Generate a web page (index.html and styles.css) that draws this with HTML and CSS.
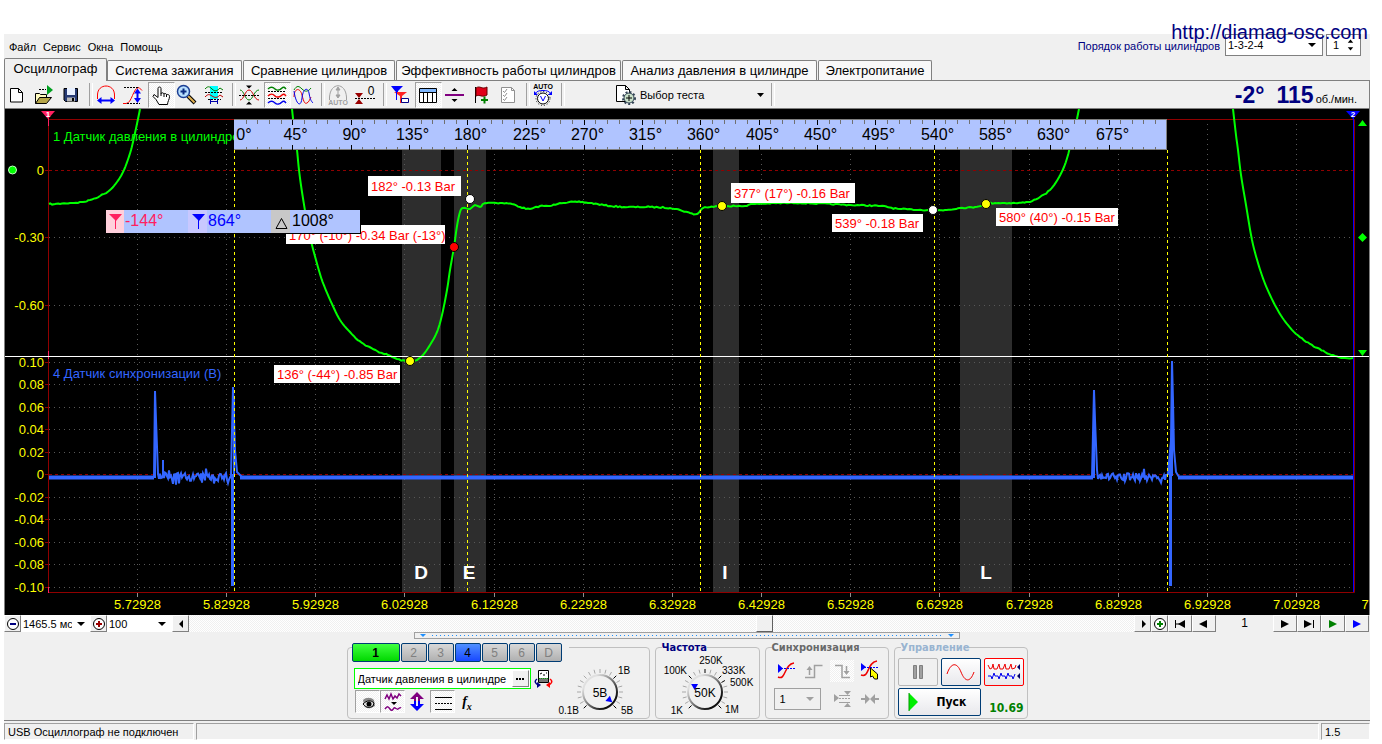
FILE: index.html
```html
<!DOCTYPE html>
<html lang="ru">
<head>
<meta charset="utf-8">
<title>USB Осциллограф</title>
<link rel="stylesheet" href="styles.css">
</head>
<body>
<a class="site-link" href="http://diamag-osc.com">http://diamag-osc.com</a>
<main class="window">
  <header class="topbar">
    <nav class="menu">
      <button>Файл</button><button>Сервис</button><button>Окна</button><button>Помощь</button>
    </nav>
    <div class="order">
      <label for="order">Порядок работы цилиндров</label>
      <span class="drop order-drop"><select id="order"><option>1-3-2-4</option></select></span>
      <span class="spin"><input id="cyl" type="text" value="1" aria-label="Цилиндр"><svg width="9" height="14" viewBox="0 0 9 14"><path d="M1 4h7L4.500 0zM1 10h7L4.500 14z"/></svg></span>
    </div>
  </header>

  <nav class="tabs">
    <button class="tab active">Осциллограф</button>
    <button class="tab ignition">Система зажигания</button>
    <button class="tab compare">Сравнение цилиндров</button>
    <button class="tab efficiency">Эффективность работы цилиндров</button>
    <button class="tab pressure">Анализ давления в цилиндре</button>
    <button class="tab power">Электропитание</button>
  </nav>

  <div class="toolbar">
    <button class="tool" aria-label="Новый"><svg viewBox="0 0 24 24"><path d="M5.500 5.500h8l4 4v9.500h-12zM13.500 5.500v4h4" fill="#fff" stroke="#000"/></svg></button>
    <button class="tool" aria-label="Открыть"><svg viewBox="0 0 24 24"><path d="M3.500 20.500v-10h4l1 1h6v3" fill="#fffbc0" stroke="#000"/><path d="M3.500 20.500l4-6h12l-5 6z" fill="#b5a548" stroke="#000"/><path d="M15 2l6 5-6 5z" fill="#00a020"/><path d="M7 6.500h7" stroke="#000" stroke-dasharray="2 1"/></svg></button>
    <button class="tool" aria-label="Сохранить"><svg viewBox="0 0 24 24"><path d="M5 5.500h13.500v13h-12l-1.500-1.500z" fill="#263a74" stroke="#000"/><path d="M8 5h8v7H8z" fill="#e8f0ff"/><path d="M8 14.500h8v4H8z" fill="#b8b8b8"/><path d="M13 15h2v3h-2z" fill="#000"/></svg></button>
    <i class="sep"></i>
    <button class="tool" aria-label="Период"><svg viewBox="0 0 24 24"><path d="M3.500 16v-4c0-12 17-12 17 0v4" fill="none" stroke="#f00"/><path d="M6 17.500h12" stroke="#00f" stroke-width="2"/><path d="M7.500 14v7L3 17.500zM16.500 14v7l4.500-3.500z" fill="#00f"/></svg></button>
    <button class="tool" aria-label="Амплитуда"><svg viewBox="0 0 24 24"><path d="M2 20.500h3c6 0 7-16 13-16l3 3" fill="none" stroke="#f00"/><path d="M3 4.500h15M6 20.500h13" stroke="#000" stroke-dasharray="2 1"/><path d="M16.500 8v9" stroke="#00f" stroke-width="2"/><path d="M13 10.500l3.500-5 3.500 5zM13 15l3.500 5 3.500-5z" fill="#00f"/></svg></button>
    <button class="tool pressed" aria-label="Рука"><svg viewBox="0 0 24 24"><path d="M10 21.500l-3-5-3-3 1-2 4 3V5.500c0-2 3-2 3 0v5c1-1 2.500-1 3 .5 1-1 2.500-.5 2.500.8 1.500-.8 3 0 3 1.700 0 3-2 5-2 8z" fill="#fff" stroke="#000"/><path d="M12 10v3M15 11v3M17.500 12v2" stroke="#000"/></svg></button>
    <button class="tool" aria-label="Масштаб"><svg viewBox="0 0 24 24"><path d="M13 13l7 7" stroke="#000" stroke-width="4"/><path d="M13 13l6.500 6.500" stroke="#e0b050" stroke-width="2"/><circle cx="8.500" cy="8.500" r="6" fill="#b8e0ff" stroke="#1c3f94" stroke-width="1.500"/><path d="M5.500 8.500h6M8.500 5.500v6" stroke="#0a2a80" stroke-width="2"/></svg></button>
    <button class="tool" aria-label="Участок"><svg viewBox="0 0 24 24"><path d="M8 3h8v13H8z" fill="#0ff"/><path d="M3 6c3-3 4-3 7 0s5 2 8-1l3 2" fill="none" stroke="#008000"/><path d="M3 14c3-3 4-3 7-1s5 2 8-1l3 2" fill="none" stroke="#c00000"/><path d="M3 9.500h18M6 16.500h13" stroke="#000" stroke-dasharray="2 1"/><path d="M8.500 16v5m7-5v5m-7-2.500h7" stroke="#00a" fill="none"/></svg></button>
    <i class="sep"></i>
    <button class="tool" aria-label="Совместить"><svg viewBox="0 0 24 24"><path d="M3 7c4 0 5 10 9 10s5-10 10-10" fill="none" stroke="#008000"/><path d="M3 17c4 0 5-10 9-10s5 10 10 10" fill="none" stroke="#c00"/><path d="M2 12.500h20" stroke="#000" stroke-dasharray="2 1"/><path d="M9 2.500h6l-3 3zM9 21.500h6l-3-3z" fill="#000"/></svg></button>
    <button class="tool pressed" aria-label="Раздельно"><svg viewBox="0 0 24 24"><path d="M3 6c3-3 5-2 7 0s5 1 7-1 3 0 4 1" fill="none" stroke="#008000" stroke-width="1.500"/><path d="M3 13c3-3 5-2 7 0s5 1 7-1 3 0 4 1" fill="none" stroke="#e00" stroke-width="1.500"/><path d="M3 20c3-3 5-2 7 0s5 1 7-1 3 0 4 1" fill="none" stroke="#00e" stroke-width="1.500"/><path d="M3 8.500h18M3 15.500h18" stroke="#000" stroke-dasharray="2 1"/></svg></button>
    <button class="tool" aria-label="Наложение"><svg viewBox="0 0 24 24"><path d="M3 7c3-5 5-4 8-1s6 3 9-1" fill="none" stroke="#008000"/><path d="M3 14c0-9 6-10 8-2s3 9 5 8 3-4 4-6" fill="none" stroke="#e00"/><path d="M3 8c2 14 7 17 8 7s6-11 7-5 2 8 4 10" fill="none" stroke="#00e"/></svg></button>
    <i class="sep"></i>
    <button class="tool" aria-label="Авто"><svg viewBox="0 0 24 24"><path d="M3.500 17v-3c1-15 16-15 17 0v3" fill="none" stroke="#a0a0a0"/><path d="M12 6v7M10 7l2-3 2 3zM10 12l2 3 2-3z" fill="#a0a0a0" stroke="#a0a0a0"/><text x="12" y="22" class="ico-text gray">AUTO</text></svg></button>
    <button class="tool" aria-label="Ноль"><svg viewBox="0 0 24 24"><path d="M2 10h8l-4 5zM2 21h8l-4-5z" fill="#900"/><path d="M2 15.500h20" stroke="#000" stroke-dasharray="2 1"/><text x="18" y="12" class="ico-zero">0</text></svg></button>
    <i class="sep"></i>
    <button class="tool" aria-label="Маркеры"><svg viewBox="0 0 24 24"><path d="M3 3h12l-5 5v3L7 8z" fill="#00f"/><path d="M6 9h13l-5 4v7h-2v-7z" fill="#f22"/><path d="M8.500 8v9" stroke="#00f"/><path d="M13.500 15.500h7v4h-7z" fill="#fff" stroke="#008"/></svg></button>
    <button class="tool pressed" aria-label="Таблица"><svg viewBox="0 0 24 24"><path d="M3.500 5.500h17v14h-17z" fill="#fff" stroke="#000"/><path d="M4 6h16v3H4z" fill="#80b8ff"/><path d="M3 9.500h18M7.500 9v10M11.500 9v10M16.500 9v10" stroke="#000"/></svg></button>
    <button class="tool" aria-label="Разделитель"><svg viewBox="0 0 24 24"><path d="M3 11h19v2H3z" fill="#800080"/><path d="M9.500 8h6l-3-3zM9.500 16h6l-3 3z"/></svg></button>
    <button class="tool" aria-label="Флаг"><svg viewBox="0 0 24 24"><path d="M6.500 4v16" stroke="#000" stroke-width="1"/><path d="M7 5c4-3 6 2 11-1v8c-5 3-7-1-11 1z" fill="#e00018" stroke="#600"/><path d="M12 17h7M15.500 13.500v7" stroke="#008000" stroke-width="2"/></svg></button>
    <button class="tool" aria-label="Список"><svg viewBox="0 0 24 24"><path d="M5.500 4.500h10l3 3v12h-13z" fill="#fff" stroke="#909090"/><path d="M15.500 4.500v3h3M7 8l1.500 1.500L11 6M7 12l1.500 1.500L11 10M7 16l1.500 1.500L11 14" fill="none" stroke="#909090"/></svg></button>
    <i class="sep"></i>
    <button class="tool" aria-label="Автонастройка"><svg viewBox="0 0 24 24"><circle cx="12" cy="15.500" r="5.500" fill="#fff" stroke="#000"/><circle cx="12" cy="15.500" r="7" fill="none" stroke="#000" stroke-dasharray="1 2"/><path d="M9.500 13l2.500 5 2.500-5M4 11c2-3 4-3.500 8-3.500S18 8 20 11" fill="none" stroke="#00f"/><path d="M3 8v4h4zM21 8v4h-4z" fill="#00f"/><text x="12" y="6" class="ico-text">AUTO</text></svg></button>
    <i class="sep"></i>
    <button class="test"><svg width="24" height="22" viewBox="0 0 24 22"><path d="M3.500 1.500h9l4 4v12h-13zM12.500 1.500v4h4" fill="#fff" stroke="#000"/><circle cx="16" cy="14" r="5" fill="#c8e0c8" stroke="#345" /><circle cx="16" cy="14" r="6" fill="none" stroke="#345" stroke-width="2" stroke-dasharray="2 2"/><path d="M13 14h6M16 11v6" stroke="#000"/></svg><span>Выбор теста</span><svg width="7" height="4" viewBox="0 0 7 4"><path d="M0 0h7L3.500 4z"/></svg></button>
    <i class="sep"></i>
    <p class="readout"><b>-2°</b><b>115</b><span>об./мин.</span></p>
  </div>

  <svg class="plot" id="plot" viewBox="5 109 1364 506" role="img" aria-label="Осциллограмма"></svg>

  <div class="scrollrow">
    <button class="mini" aria-label="Уменьшить"><svg width="14" height="14" viewBox="0 0 14 14"><circle cx="7" cy="7" r="5.500" fill="#fff" stroke="#000"/><path d="M4 7h6" stroke="#000080" stroke-width="2"/></svg></button>
    <span class="drop scale-drop"><select aria-label="Развёртка"><option>1465.5 мс</option></select></span>
    <button class="mini" aria-label="Увеличить"><svg width="14" height="14" viewBox="0 0 14 14"><circle cx="7" cy="7" r="5.500" fill="#fff" stroke="#000"/><path d="M4 7h6M7 4v6" stroke="#900" stroke-width="2"/></svg></button>
    <span class="drop pct-drop"><select aria-label="Масштаб"><option>100</option></select></span>
    <button class="mini" aria-label="Влево"><svg width="14" height="14" viewBox="0 0 14 14"><path d="M9 3v8L5 7z"/></svg></button>
    <div class="track"><i class="thumb"></i></div>
    <button class="mini" aria-label="Вправо"><svg width="14" height="14" viewBox="0 0 14 14"><path d="M6 3v8l4-4z"/></svg></button>
    <button class="mini" aria-label="Добавить"><svg width="14" height="14" viewBox="0 0 14 14"><circle cx="7" cy="7" r="5.500" fill="#fff" stroke="#000"/><path d="M4 7h6M7 4v6" stroke="#008000" stroke-width="2"/></svg></button>
    <button class="step" aria-label="В начало"><svg width="14" height="14" viewBox="0 0 14 14"><path d="M2.500 3v8M3 7h4" stroke="#000"/><path d="M12 3v8L5 7z"/></svg></button>
    <button class="step" aria-label="Назад"><svg width="14" height="14" viewBox="0 0 14 14"><path d="M10 3v8L2 7z"/></svg></button>
    <output class="page">1</output>
    <button class="step" aria-label="Вперёд"><svg width="14" height="14" viewBox="0 0 14 14"><path d="M3 3v8l8-4z"/></svg></button>
    <button class="step" aria-label="В конец"><svg width="14" height="14" viewBox="0 0 14 14"><path d="M11.500 3v8" stroke="#000"/><path d="M2 3v8l8-4z"/></svg></button>
    <button class="step" aria-label="Воспроизвести"><svg width="14" height="14" viewBox="0 0 14 14"><path d="M3 3v8l8-4z" fill="#008000"/></svg></button>
    <button class="step" aria-label="Дальше"><svg width="14" height="14" viewBox="0 0 14 14"><path d="M3 3v8l8-4z" fill="#00f"/></svg></button>
  </div>

  <div class="splitter"><svg width="6" height="3" viewBox="0 0 6 3"><path d="M0 0h6L3 3z"/></svg><i></i><svg width="6" height="3" viewBox="0 0 6 3"><path d="M0 0h6L3 3z"/></svg></div>

  <div class="panel">
    <section class="group channel">
      <div class="chans">
        <button class="ch ch-1">1</button><button class="ch">2</button><button class="ch">3</button><button class="ch ch-4">4</button><button class="ch">5</button><button class="ch">6</button><button class="ch">D</button>
      </div>
      <div class="chan-body">
        <div class="chan-left">
          <div class="sensor-row">
            <span class="sensor"><input type="text" value="Датчик давления в цилиндре" aria-label="Датчик"><button aria-label="Выбрать датчик"><svg width="9" height="2" viewBox="0 0 9 2"><path d="M0 0h2v2H0zM3 0h2v2H3zM6 0h2v2H6z"/></svg></button></span>
            <svg width="20" height="20" viewBox="0 0 20 20"><path d="M4.500 1.500h10v12h-10z" fill="#fff" stroke="#000"/><path d="M5 9h9v4H5z" fill="#777"/><path d="M5 9.500h9" stroke="#0a0" stroke-dasharray="1 1"/><path d="M6 5l2-1m2 3V5m2-1h1" stroke="#000"/><path d="M3 10c-3 2-2 5 2 6" fill="none" stroke="#008" stroke-width="1.500"/><path d="M3 13l4 3-4 3z" fill="#008"/><path d="M16 10c3 2 2 5-2 6" fill="none" stroke="#f00" stroke-width="1.500"/><path d="M16 13l-4 3 4 3z" fill="#f00"/></svg>
          </div>
          <div class="modes">
            <button class="mode pressed" aria-label="Показать"><svg width="24" height="22" viewBox="0 0 24 22"><path d="M7 9c3-3 8-3 11 0l1 6-4 2c-4 1-7-1-7-3z" fill="#888"/><path d="M7 13c4-4 8-4 11-1l-1 3c-3 2-7 2-10-2z" fill="#ddd" stroke="#000"/><circle cx="13" cy="13" r="2.500"/></svg></button>
            <button class="mode pressed" aria-label="Фильтр"><svg width="24" height="22" viewBox="0 0 24 22"><path d="M4 8l2-4 2 4 2-5 2 5 2-3 2 2 2-4 2 2M4 18c2-3 3-3 5 0s3 0 4-1 3 2 4 1 2-2 3-1" fill="none" stroke="#800080" stroke-width="1.500"/><path d="M10 11h6l-3 3z"/></svg></button>
            <button class="mode" aria-label="Инверсия"><svg width="24" height="22" viewBox="0 0 24 22"><path d="M12 1l7 7h-4v3h-2V6h-2v5H9V8H5z" fill="#800080"/><path d="M12 20l7-7h-4v-3h-2v5h-2v-5H9v3H5z" fill="#00f"/></svg></button>
            <button class="mode pressed" aria-label="Линии"><svg width="24" height="22" viewBox="0 0 24 22"><path d="M4 6.500h17M4 18.500h17" stroke="#000"/><path d="M4 12.500h17" stroke="#000" stroke-dasharray="2 1"/></svg></button>
            <button class="mode fx">f<sub>x</sub></button>
          </div>
        </div>
        <svg class="knob" id="volt" width="82" height="54" viewBox="558 662 82 54" role="img" aria-label="Диапазон 5В"></svg>
      </div>
    </section>

    <section class="group freq">
      <h2 class="navy">Частота</h2>
      <svg class="knob" id="freq" width="96" height="60" viewBox="660 656 96 60" role="img" aria-label="Частота 50K"></svg>
    </section>

    <section class="group sync">
      <h2>Синхронизация</h2>
      <div class="sync-grid">
        <button class="sy" aria-label="Канал"><svg width="24" height="22" viewBox="0 0 24 22"><path d="M4 17c8 4 6-13 16-14" fill="none" stroke="#e00" stroke-width="1.500"/><path d="M4 8.500h17" stroke="#00f" stroke-dasharray="2 1"/><path d="M4 4v9l5-4.500z" fill="#00f"/></svg></button>
        <button class="sy" aria-label="Фронт"><svg width="24" height="22" viewBox="0 0 24 22"><path d="M3 17.500h9.500v-12h8M7.500 15v-7" fill="none" stroke="#a0a0a0" stroke-width="1.500"/><path d="M4.500 10h6l-3-4z" fill="#a0a0a0"/></svg></button>
        <button class="sy dither" aria-label="Спад"><svg width="24" height="22" viewBox="0 0 24 22"><path d="M5 5.500h7v12h8M16.500 6v7" fill="none" stroke="#a0a0a0" stroke-width="1.500"/><path d="M13.500 11h6l-3 4z" fill="#a0a0a0"/></svg></button>
        <button class="sy" aria-label="Уровень"><svg width="24" height="22" viewBox="0 0 24 22"><path d="M3 15c9 3 5-12 16-14" fill="none" stroke="#e00" stroke-width="1.500"/><path d="M3 7.500h18" stroke="#00f" stroke-dasharray="2 1"/><path d="M3 3v8l5-4z" fill="#00f"/><path d="M12.500 8v9l2-1 2 3h3v-5z" fill="#ff0" stroke="#000"/></svg></button>
        <span class="drop sync-drop"><select aria-label="Канал синхронизации"><option>1</option></select></span>
        <button class="sy" aria-label="Окно"><svg width="24" height="22" viewBox="0 0 24 22"><path d="M9 10.500h11" stroke="#a0a0a0" stroke-dasharray="2 1"/><path d="M4 6v8l5-4zM14 3h7l-3.500 4zM14 19h7l-3.500-4z" fill="#a0a0a0"/><path d="M9 7.500h11M9 14.500h11" stroke="#a0a0a0"/></svg></button>
        <button class="sy" aria-label="Сжать"><svg width="24" height="22" viewBox="0 0 24 22"><path d="M3 11h5M16 11h5" stroke="#a0a0a0" stroke-width="2"/><path d="M7 6v10l5-5zM17 6v10l-5-5z" fill="#a0a0a0"/></svg></button>
      </div>
    </section>

    <section class="group ctrl">
      <h2 class="steel">Управление</h2>
      <div class="ctrl-grid">
        <button class="cb off" aria-label="Пауза"><svg width="14" height="16" viewBox="0 0 14 16"><path d="M2.500 1.500h3v13h-3zM8.500 1.500h3v13h-3z" fill="#a0a0a0" stroke="#808080"/></svg></button>
        <button class="cb" aria-label="Непрерывно"><svg width="30" height="22" viewBox="0 0 30 22"><path d="M1 13C5 1 11 1 15 11s9 11 13 0" fill="none" stroke="#e00"/></svg></button>
        <button class="cb multi" aria-label="Запись"><svg width="34" height="22" viewBox="0 0 34 22"><path d="M1 4l2 4 2-1 1-4 1 5 3 0 2-5 1 5 3 0 2-5 1 5 3 0 2-5 1 5 3-1 1-3" fill="none" stroke="#e00"/><path d="M1 15h3l1 3 2-6 1 3h3l1 3 2-6 1 3h3l1 3 2-6 1 3h3l1 3 2-5" fill="none" stroke="#00e"/><path d="M33 3v6l-3-3zM33 12v6l-3-3z" fill="#006"/></svg></button>
        <button class="cb start"><svg width="11" height="20" viewBox="0 0 11 20"><path d="M1 1l9 9-9 9z" fill="#0e0"/><path d="M1 1v18" stroke="#090"/></svg><span>Пуск</span></button>
        <output class="ver">10.69</output>
      </div>
    </section>
  </div>

  <footer class="status">
    <span class="cell first">USB Осциллограф не подключен</span>
    <span class="cell mid"></span>
    <span class="cell last">1.5</span>
  </footer>
</main>
<script src="plot.js"></script>
</body>
</html>
```
FILE: styles.css
```css
* { box-sizing: border-box; }
body {
  margin: 0;
  background: #fff;
  color: #000;
  font: 11px/14px "Liberation Sans", Arial, sans-serif;
}
button, select, input {
  font: inherit;
  color: inherit;
  margin: 0;
  padding: 0;
  border: 0;
  border-radius: 0;
  background: none;
}
svg { display: block; }
h2, p { margin: 0; }

.site-link {
  position: absolute;
  top: 20px;
  right: 14px;
  z-index: 2;
  font-size: 20px;
  line-height: 24px;
  color: #000080;
  text-decoration: none;
}
.window {
  margin: 34px 12px 0 4px;
  background: #f0f0f0;
}

.topbar {
  display: flex;
  justify-content: space-between;
  height: 25px;
  padding-left: 5px;
}
.menu { display: flex; align-items: center; gap: 7px; }
.order { display: flex; align-items: flex-start; padding-right: 9px; color: #000080; }
.order label { padding: 5px 5px 0 0; }
.drop {
  position: relative;
  display: block;
  background: #fff;
  color: #000;
}
.drop select {
  appearance: none;
  display: block;
  width: 100%;
  height: 100%;
  padding: 0 2px;
}
.drop::after {
  content: "";
  position: absolute;
  right: 6px;
  top: 50%;
  margin-top: -2px;
  border: 4px solid transparent;
  border-top-color: #000;
  border-bottom: 0;
}
.order-drop { width: 98px; height: 22px; border: 1px solid #808080; }
.spin {
  display: flex;
  align-items: center;
  width: 35px;
  height: 22px;
  margin-left: 3px;
  padding: 0 6px;
  border: 1px solid #808080;
  background: #fff;
  color: #000;
}
.spin input { width: 14px; }

.tabs {
  display: flex;
  align-items: flex-end;
  gap: 1px;
  height: 22px;
  border-bottom: 1px solid #808080;
  font-size: 13px;
}
.tab {
  height: 20px;
  border: 1px solid #808080;
  border-bottom: 0;
  border-radius: 2px 2px 0 0;
  background: #f8f8f8;
  white-space: nowrap;
  text-align: center;
}
.tab.active {
  width: 103px;
  height: 23px;
  margin: 0 -1px -1px 0;
  padding-bottom: 2px;
  background: #f0f0f0;
}
.ignition { width: 135px; }
.compare { width: 152px; }
.efficiency { width: 225px; }
.pressure { width: 195px; }
.power { width: 114px; }

.toolbar {
  display: flex;
  align-items: center;
  height: 27px;
  border: solid #808080;
  border-width: 0 1px;
}
.tool { width: 27px; height: 26px; }
.tool svg { width: 24px; height: 24px; }
.pressed {
  background: repeating-conic-gradient(#fff 0 25%, #f0f0f0 0 50%) 0 0 / 2px 2px;
  border: 1px solid #fff;
  border-top-color: #a0a0a0;
  border-left-color: #a0a0a0;
}
.sep { flex: none; width: 8px; height: 23px; }
.sep::before {
  content: "";
  display: block;
  width: 2px;
  height: 100%;
  margin: 0 3px;
  border-left: 1px solid #a0a0a0;
  border-right: 1px solid #fff;
}
.ico-text { font-size: 7px; font-weight: bold; text-anchor: middle; }
.ico-text.gray { fill: #a0a0a0; }
.ico-zero { font-size: 12px; text-anchor: middle; }
.test {
  display: flex;
  align-items: center;
  width: 202px;
  padding: 0 4px 0 47px;
  text-align: left;
}
.test span { flex: 1; padding-left: 3px; }
.readout {
  display: flex;
  align-items: baseline;
  margin-left: auto;
  padding-right: 12px;
}
.readout b { font-size: 23px; line-height: 26px; color: #000080; }
.readout b + b { margin-left: 12px; }
.readout span { margin-left: 2px; }

.plot {
  width: 100%;
  height: auto;
  border: solid #808080;
  border-width: 1px 1px 0;
  background: #000;
}
.plot text { fill: #ff0; font-size: 13px; }
.plot .y { text-anchor: end; }
.plot .x { text-anchor: middle; }
.plot .deg { fill: #000; font-size: 16px; }
.plot .ch1 { fill: #0f0; }
.plot .ch4 { fill: #36f; }
.plot .tag { fill: #f00; }
.plot .zone { fill: #fff; font: bold 19px "Liberation Sans", sans-serif; text-anchor: middle; }
.plot .cur { font-size: 16px; }
.plot .cur-a { fill: #ff2060; }
.plot .cur-b { fill: #00f; }
.plot .cur-d { fill: #000; }
.plot .pin { fill: #fff; font-size: 8px; font-weight: bold; text-anchor: middle; }

.scrollrow { display: flex; height: 17px; padding-right: 1px; }
.mini, .step {
  display: flex;
  align-items: center;
  justify-content: center;
  flex: none;
  width: 17px;
  border: 1px solid #fff;
  border-right-color: #808080;
  border-bottom-color: #808080;
}
.step { width: 24px; }
.page { width: 57px; text-align: center; font-size: 12px; line-height: 17px; }
.scale-drop { width: 69px; overflow: hidden; }
.scale-drop select { padding-right: 18px; text-overflow: clip; }
.scale-drop::after { right: 5px; }
.pct-drop { width: 65px; }
.track {
  display: flex;
  flex: 1;
  padding-left: 567px;
  background: repeating-conic-gradient(#fff 0 25%, #f0f0f0 0 50%) 0 0 / 2px 2px;
}
.thumb {
  width: 17px;
  background: #f0f0f0;
  border: 1px solid #fff;
  border-right-color: #606060;
  border-bottom-color: #606060;
}

.splitter {
  display: flex;
  align-items: center;
  gap: 6px;
  width: 546px;
  height: 7px;
  margin: 0 auto;
  padding: 0 5px;
  border: 1px solid #a0a0a0;
}
.splitter path { fill: #1e90ff; }
.splitter i {
  flex: 1;
  height: 1px;
  background: repeating-linear-gradient(90deg, #1e90ff 0 1px, transparent 1px 4px);
}

.panel {
  display: flex;
  justify-content: center;
  gap: 5px;
  padding: 8px 0 1px;
  border-bottom: 1px solid #808080;
}
.group {
  height: 72px;
  border: 1px solid #c0c0c0;
  border-radius: 4px;
}
.group h2 {
  width: fit-content;
  margin: -7px 0 0 6px;
  font: bold 11px/14px "DejaVu Sans Condensed", "DejaVu Sans", sans-serif;
  color: #696969;
  background: #f0f0f0;
}
.group .navy { color: #000080; }
.group .steel { color: #99b4d1; }
.channel { width: 303px; padding-left: 4px; }
.chan-body { display: flex; }
.chan-left { width: 206px; }
.chans {
  display: flex;
  gap: 1px;
  width: fit-content;
  margin-top: -5px;
  padding-right: 7px;
  background: #f0f0f0;
}
.ch {
  width: 26px;
  height: 19px;
  border: 1px solid #003c74;
  border-radius: 2px;
  background: linear-gradient(#d8d8d8, #b0b0b0);
  color: #808080;
  font-size: 12px;
}
.ch-1 { width: 48px; background: linear-gradient(#40ff40, #00d800); color: #000; font-weight: bold; }
.ch-4 { background: linear-gradient(#5090ff, #1848ff); color: #000; }
.sensor-row { display: flex; align-items: center; gap: 3px; margin: 6px 0 0 2px; }
.sensor {
  display: flex;
  width: 177px;
  height: 21px;
  padding: 1px;
  border: 1px solid #0f0;
  background: #fff;
}
.sensor input { flex: 1; min-width: 0; padding-left: 2px; }
.sensor button {
  width: 17px;
  padding-left: 3px;
  background: #f0f0f0;
  border: 1px solid #fff;
  border-right-color: #808080;
  border-bottom-color: #808080;
}
.modes { display: flex; margin: 1px 0 0 3px; }
.mode { width: 25px; height: 23px; }
.fx { font: italic bold 14px/20px "Liberation Serif", serif; }
.fx sub { font-size: 10px; line-height: 8px; }
.knob text { font-size: 10px; }
.knob .val { font-size: 12px; text-anchor: middle; }
.knob .end { text-anchor: end; }
.knob .mid { text-anchor: middle; }

.freq { width: 105px; }
.freq .knob { margin: 1px 0 0 4px; }

.sync { width: 124px; }
.sync-grid {
  display: grid;
  grid-template-columns: 28px 28px 28px 28px;
  grid-auto-rows: 22px;
  row-gap: 6px;
  padding: 5px 0 0 8px;
}
.sy { width: 24px; height: 22px; }
.dither { background: repeating-conic-gradient(#fff 0 25%, #f0f0f0 0 50%) 0 0 / 2px 2px; }
.sync-drop { grid-column: span 2; width: 47px; border: 1px solid #a0a0a0; background: #f0f0f0; }
.sync-drop select { padding-left: 5px; }
.sync-drop::after { border-top-color: #a0a0a0; }

.ctrl { width: 134px; }
.ctrl-grid {
  display: grid;
  grid-template-columns: 40px 40px 40px;
  grid-template-rows: 28px 28px;
  gap: 2px 3px;
  padding: 3px 0 0 3px;
}
.cb {
  display: flex;
  align-items: center;
  justify-content: center;
  border: 1px solid #003c74;
  border-radius: 2px;
  background: linear-gradient(#fff, #e8e8ec);
}
.cb.off { border-color: #b8b8b8; background: #f0f0f0; }
.cb.multi { border-color: #f00; }
.cb.start {
  grid-column: span 2;
  justify-content: flex-start;
  gap: 18px;
  padding-left: 9px;
  font: bold 12px/16px "DejaVu Sans Condensed", "DejaVu Sans", sans-serif;
}
.ver {
  align-self: end;
  text-align: right;
  color: #008000;
  font: bold 12px/16px "DejaVu Sans Condensed", "DejaVu Sans", sans-serif;
}

.status { display: flex; gap: 2px; padding-top: 2px; }
.cell {
  height: 17px;
  padding: 1px 3px;
  border: 1px solid #a0a0a0;
  border-right-color: #fff;
  border-bottom-color: #fff;
}
.cell.first { width: 190px; }
.cell.mid { flex: 1; }
.cell.last { width: 49px; }
```
FILE: plot.js
```js
const NS = "http://www.w3.org/2000/svg";

function add(parent, name, attrs, text) {
  const el = document.createElementNS(NS, name);
  for (const key in attrs) el.setAttribute(key, attrs[key]);
  if (text !== undefined) el.textContent = text;
  parent.appendChild(el);
  return el;
}

// Repeatable noise, so that the trace is the same on every load.
let seed = 7;
function rnd() {
  seed = (seed * 16807) % 2147483647;
  return seed / 2147483647;
}

const plot = document.getElementById("plot");
const line = (d, stroke, width, dash) =>
  add(plot, "path", { d, stroke, fill: "none", "stroke-width": width || 1, "stroke-dasharray": dash || "none" });
const rect = (x, y, width, height, fill) => add(plot, "rect", { x, y, width, height, fill });
const label = (x, y, cls, text) => add(plot, "text", { x, y, class: cls }, text);

// Phase zones
[[402, 39], [454, 32], [713, 26], [960, 52]].forEach(([x, w]) => rect(x, 150, w, 442, "#2d2d2d"));

// Grid
for (let i = 0; i < 14; i++) {
  const x = Math.round(137 + i * 89.15) + 0.5;
  line(`M${x} 124V592`, "#585858", 1, "1 4");
  line(`M${x} 593v4`, "#909090");
  label(x, 609, "x", (5.72928 + i * 0.1).toFixed(5));
}
label(1385, 609, "x", "7.12928");

const rows = [[170, "0"], [237, "-0.30"], [305, "-0.60"]];
["0.10", "0.08", "0.06", "0.04", "0.02", "0", "-0.02", "-0.04", "-0.06", "-0.08", "-0.10"]
  .forEach((t, i) => rows.push([Math.floor(362 + i * 22.5), t]));
rows.forEach(([y, t]) => {
  const zero = t === "0";
  line(`M49 ${y + 0.5}H1353`, zero ? "#900000" : "#585858", 1, zero ? "3 3" : "1 4");
  line(`M45 ${y + 0.5}h4`, "#900000");
  label(44, y + 5, "y", t);
});

line("M48.500 119.500H1354.500V592.500H48.500Z", "#900000");
line("M1353.500 115V592", "#00f");
line("M48.500 351v8M48.500 587v6", "#ff2060");

// Pressure trace
const traces = [
  [49,204, 55,204, 70,203, 83,202, 90,200, 100,196, 110,190, 117,182, 122,174, 126,165, 131,150, 135,133, 138,119, 140,109],
  [292,109, 294,127, 297,150, 299,170, 302,192, 307,222, 312,245, 320,274, 325,288, 332,304, 340,320, 350,332, 362,343, 377,351, 388,355, 397,359, 405,361, 410,361, 417,360, 423,355, 430,345, 437,332, 442,315, 447,290, 450,270, 454,247, 457,226, 460,212, 463,208, 470,209, 475,205, 480,207, 485,203, 500,203, 512,204, 520,207, 530,209, 540,206, 550,206, 560,203, 577,202, 590,203, 610,206, 628,207, 650,207, 670,208, 680,210, 690,213, 697,214, 703,208, 710,207, 722,206, 735,206, 745,206, 755,204, 800,203, 850,205, 880,206, 900,209, 933,210, 945,210, 960,208, 975,207, 986,204, 995,203, 1015,203, 1028,202, 1040,197, 1050,190, 1058,179, 1064,167, 1068,155, 1070,147, 1075,130, 1077,119, 1079,109],
  [1233,109, 1236,135, 1238,150, 1241,175, 1246,205, 1252,240, 1258,263, 1264,281, 1270,295, 1276,307, 1284,320, 1296,334, 1310,344, 1325,352, 1335,356, 1345,358, 1353,358]
];
// Catmull-Rom value between b and c
const spline = (a, b, c, d, t) =>
  0.5 * (2 * b + (c - a) * t + (2 * a - 5 * b + 4 * c - d) * t * t + (3 * b - a - 3 * c + d) * t * t * t);
traces.forEach(p => {
  const n = p.length / 2;
  const at = i => { const k = Math.min(n - 1, Math.max(0, i)); return [p[2 * k], p[2 * k + 1]]; };
  let d = "";
  for (let i = 0; i < n - 1; i++) {
    const [a, b, c, e] = [at(i - 1), at(i), at(i + 1), at(i + 2)];
    const flat = Math.abs(c[1] - b[1]) < Math.abs(c[0] - b[0]);
    const steps = flat ? Math.max(2, Math.round((c[0] - b[0]) / 2)) : 6;
    for (let k = 0; k < steps; k++) {
      const t = k / steps;
      const j = flat && k ? (rnd() - 0.5) * 1.2 : 0;
      d += `${d ? "L" : "M"}${spline(a[0], b[0], c[0], e[0], t).toFixed(2)} ${(spline(a[1], b[1], c[1], e[1], t) + j).toFixed(2)}`;
    }
  }
  line(d + `L${p[p.length - 2]} ${p[p.length - 1]}`, "#0f0", 2);
});

// Sync trace
function noise(x0, x1) {
  let d = "";
  for (let x = x0; x < x1; x += 1) d += `L${x} ${(477 + (rnd() - 0.5) * (rnd() > 0.85 ? 17 : 8)).toFixed(1)}`;
  return d;
}
line("M49 477.500H154M240 477.500H1093M1178 477.500H1353", "#36f", 4);
line("M154 477L155 391L156 420L158 474" + noise(159, 232) + "L233 387L235 450L237 472L242 477", "#36f", 2);
line("M155 391V478M163 478V460M232.500 474V586M234 396V476", "#36f", 2);
line("M232.500 474V586", "#36f", 3);
line("M1092 477L1094 390L1095 420L1097 470" + noise(1098, 1169) + "L1171 440L1172 361L1173 401L1174 450L1176 472L1179 477", "#36f", 2);
line("M1094 390V478M1172 361V476", "#36f", 2);
line("M1170.500 450V586", "#36f", 3);

line("M5 356.500H1369", "#fff");
[234, 467, 700, 934, 1167].forEach(x => line(`M${x + 0.5} 150V592`, "#ff0", 1, "3 3"));

label(53, 141, "ch1", "1 Датчик давления в цилиндре");
label(53, 378, "ch4", "4 Датчик синхронизации (В)");

// Degree ruler
rect(234, 119, 933, 31, "#b0c4ff");
line("M234 119.500H1167M234 149.500H1167M1166.500 119V150", "#808080");
for (let i = 0; i < 80; i++) {
  const x = Math.round(234 + i * 11.66) + 0.5;
  const major = i % 5 === 0;
  if (i) line(major ? `M${x} 120v5M${x} 150v-5` : `M${x} 120v4M${x} 150v-3`, major ? "#000" : "#707070");
  if (major) label(i ? x + 3 : 244, 140, "x deg", i * 9 + "°");
}

// Zone letters
[[421, "D"], [469, "E"], [725, "I"], [986, "L"]].forEach(([x, t]) => label(x, 579, "zone", t));

// Value tags
[[368, 176, 93, 20, "182° -0.13 Bar"],
 [286, 225, 159, 19, "170° (-10°) -0.34 Bar (-13°)"],
 [274, 365, 126, 18, "136° (-44°) -0.85 Bar"],
 [731, 183, 124, 20, "377° (17°) -0.16 Bar"],
 [832, 214, 91, 18, "539° -0.18 Bar"],
 [996, 208, 122, 18, "580° (40°) -0.15 Bar"]].forEach(([x, y, w, h, t]) => {
  rect(x, y, w, h, "#fff");
  label(x + 3, y + (h > 18 ? 15 : 14), "tag", t);
});
[[410, 361, "#ff0"], [454, 247, "#f00"], [470, 199, "#fff"], [722, 206, "#ff0"], [933, 210, "#fff"], [986, 204, "#ff0"]]
  .forEach(([cx, cy, fill]) => add(plot, "circle", { cx, cy, r: 4.5, fill, stroke: "#000" }));

// Cursor readout
rect(106, 210, 255, 24, "#000");
rect(106, 210, 254, 23, "#b0c4ff");
rect(106, 210, 18, 23, "#ffd0dc");
rect(188, 210, 19, 23, "#c8c8ff");
rect(271, 210, 19, 23, "#c8c8c8");
add(plot, "path", { d: "M109 214h13l-6 7zM115 220h1v9h-1z", fill: "#ff2060" });
add(plot, "path", { d: "M192 214h13l-6 7zM198 220h1v9h-1z", fill: "#00f" });
line("M276 228.500H287L281.500 218.500Z", "#000");
label(125, 226, "cur cur-a", "-144°");
label(208, 226, "cur cur-b", "864°");
label(292, 226, "cur cur-d", "1008°");

// Edge markers
add(plot, "circle", { cx: 12.5, cy: 170, r: 4, fill: "#0f0", stroke: "#c0ffc0" });
add(plot, "path", { d: "M41 111h14l-7 8zM48 118h1v8h-1z", fill: "#ff2060" });
add(plot, "path", { d: "M1346 111h14l-7 8z", fill: "#00f" });
label(48, 117, "pin", "1");
label(1353, 117, "pin", "2");
add(plot, "path", { d: "M1358 126h9l-4.500-6zM1358 350h9l-4.500 6zM1358 237.500l4.500-4.500 4.500 4.500-4.500 4.500z", fill: "#0f0" });

// Rotary knobs
function knob(id, cx, cy, r, val, pointer, marks, texts) {
  const svg = document.getElementById(id);
  const defs = add(svg, "defs", {});
  const g = add(defs, "linearGradient", { id: id + "-rim", x1: 0, y1: 0, x2: 1, y2: 1 });
  add(g, "stop", { offset: 0.2, "stop-color": "#e0e0e0" });
  add(g, "stop", { offset: 0.8, "stop-color": "#101010" });
  for (let a = -135; a <= 135; a += 15) {
    const s = Math.sin(a * Math.PI / 180), c = Math.cos(a * Math.PI / 180), on = marks.includes(a);
    add(svg, "path", { d: `M${cx + s * (r + 2)} ${cy - c * (r + 2)}L${cx + s * (r + 6)} ${cy - c * (r + 6)}`, stroke: on ? "#000" : "#a8a8a8" });
  }
  add(svg, "circle", { cx, cy, r, fill: "#f0f0f0", stroke: `url(#${id}-rim)`, "stroke-width": 2 });
  add(svg, "path", { d: "M-3.500 2L0-4L3.500 2z", fill: "#00f", transform: `rotate(${pointer} ${cx} ${cy}) translate(${cx} ${cy - r + 5})` });
  add(svg, "text", { x: cx, y: cy + 5, class: "val" }, val);
  texts.forEach(([x, y, t, cls]) => add(svg, "text", { x, y, class: cls || "" }, t));
}
knob("volt", 600, 692, 17, "5В", 130, [-135, 45, 135],
  [[618, 674, "1В"], [621, 714, "5В"], [579, 714, "0.1В", "end"]]);
knob("freq", 705, 692, 17, "50K", -60, [-135, -45, 0, 45, 60, 135],
  [[711, 664, "250K", "mid"], [687, 674, "100K", "end"], [722, 674, "333K"], [730, 686, "500K"], [683, 714, "1K", "end"], [725, 713, "1M"]]);
```
